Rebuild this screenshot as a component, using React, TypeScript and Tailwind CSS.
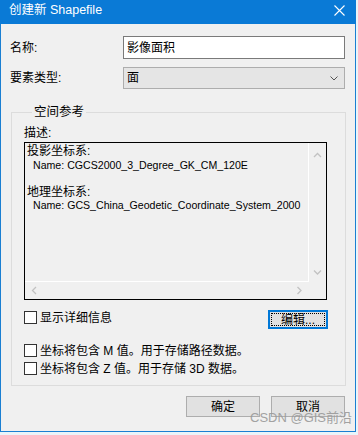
const ui = { fontFamily: "'Liberation Sans', 'Noto Sans CJK SC', sans-serif" };

function CheckBox() {
  return <span className="inline-block w-[13px] h-[13px] shrink-0 border border-[#333] bg-white" />;
}

function Chevron({ dir }: { dir: "up" | "down" | "left" | "right" }) {
  const d = {
    up: "M1 5 L4.5 1.5 L8 5",
    down: "M1 1.5 L4.5 5 L8 1.5",
    left: "M5 1 L1.5 4.5 L5 8",
    right: "M1.5 1 L5 4.5 L1.5 8",
  }[dir];
  const vert = dir === "up" || dir === "down";
  return (
    <svg width={vert ? 9 : 7} height={vert ? 7 : 9} viewBox={vert ? "0 0 9 7" : "0 0 7 9"} fill="none">
      <path d={d} stroke="#c2c2c2" strokeWidth="1.3" />
    </svg>
  );
}

export default function App() {
  return (
    <div className="w-[358px] h-[435px] bg-[#eaf4f9] overflow-hidden" style={ui}>
      <div className="relative w-[356px] h-[432px] bg-[#f0f0f0] border-x border-b border-[#1a7fd2] flex flex-col">
        {/* Title bar */}
        <div className="h-[24px] shrink-0 -mx-px bg-[#0a7ad6] flex items-center justify-between pl-[9px] pr-[11px] text-white text-[12.5px]">
          <span className="-mt-[3px]">创建新 Shapefile</span>
          <svg width="11" height="11" viewBox="0 0 11 11" className="-mt-[4px]">
            <path d="M0.5 0.5 L10.5 10.5 M10.5 0.5 L0.5 10.5" stroke="white" strokeWidth="1.1" />
          </svg>
        </div>

        {/* Name */}
        <div className="mt-[12px] h-[23px] flex items-center pl-[9px] text-[12px] leading-[16px] text-black">
          <span className="w-[113px]">名称:</span>
          <div className="w-[222px] h-[23px] bg-white border border-[#7a7a7a] flex items-center pl-[3px]">
            影像面积
          </div>
        </div>

        {/* Feature type */}
        <div className="mt-[8px] h-[22px] flex items-center pl-[9px] text-[12px] leading-[16px] text-black">
          <span className="w-[113px]">要素类型:</span>
          <div className="w-[222px] h-[22px] bg-[#e5e5e5] border border-[#adadad] flex items-center justify-between pl-[3px] pr-[6px]">
            <span>面</span>
            <svg width="8" height="5" viewBox="0 0 8 5" fill="none">
              <path d="M0.5 0.5 L4 4 L7.5 0.5" stroke="#555" strokeWidth="1" />
            </svg>
          </div>
        </div>

        {/* Spatial reference group */}
        <fieldset className="mt-[15px] ml-[10px] w-[335px] border border-[#dcdcdc] pl-[12px] pr-[17px] pb-[10px] text-[12px] leading-[16px] text-black">
          <legend className="ml-[8px] px-[2px] leading-[16px] text-[12.5px]">空间参考</legend>
          <div className="mt-[5px] leading-[16px]">描述:</div>
          <div className="mt-[1px] w-[303px] h-[158px] border border-black flex flex-col">
            <div className="flex flex-1 min-h-0">
              <div className="flex-1 border-r border-b border-white pl-[2px] pt-[2px] leading-[13.6px] text-[12px]">
                <div>投影坐标系:</div>
                <div className="pl-[6px] text-[10.6px]">Name: CGCS2000_3_Degree_GK_CM_120E</div>
                <div>&nbsp;</div>
                <div>地理坐标系:</div>
                <div className="pl-[6px] text-[10.6px]">Name: GCS_China_Geodetic_Coordinate_System_2000</div>
              </div>
              <div className="w-[17px] flex flex-col items-center justify-between pt-[9px] pb-[6px]">
                <Chevron dir="up" />
                <Chevron dir="down" />
              </div>
            </div>
            <div className="h-[17px] flex">
              <div className="flex-1 flex items-center justify-between pl-[6px] pr-[6px]">
                <Chevron dir="left" />
                <Chevron dir="right" />
              </div>
              <div className="w-[17px]" />
            </div>
          </div>

          <div className="mt-[10px] h-[19px] flex items-start justify-between">
            <label className="flex items-center gap-[3px] h-[13px] mt-[1px]">
              <CheckBox />
              <span>显示详细信息</span>
            </label>
            <button className="w-[60px] h-[19px] border-2 border-[#0078d7] bg-[#e1e1e1] p-px flex">
              <span className="flex-1 border border-dotted border-black flex items-center justify-center text-[12px] leading-none">
                编辑...
              </span>
            </button>
          </div>

          <label className="mt-[15px] h-[13px] flex items-center gap-[3px]">
            <CheckBox />
            <span>坐标将包含 M 值。用于存储路径数据。</span>
          </label>
          <label className="mt-[5px] h-[13px] flex items-center gap-[3px]">
            <CheckBox />
            <span>坐标将包含 Z 值。用于存储 3D 数据。</span>
          </label>
        </fieldset>

        {/* Buttons */}
        <div className="mt-[10px] flex justify-end gap-[11px] pr-[10px] text-[12px] leading-[16px] text-black">
          <button className="w-[74px] h-[21px] bg-[#e1e1e1] border border-[#adadad]">确定</button>
          <button className="w-[74px] h-[21px] bg-[#e1e1e1] border border-[#adadad]">取消</button>
        </div>

        {/* Watermark */}
        <div className="absolute left-[249px] top-[410px] whitespace-nowrap text-[13px] leading-[16px] text-[#9a9a9a] opacity-90">
          CSDN @GIS前沿
        </div>
      </div>
    </div>
  );
}
